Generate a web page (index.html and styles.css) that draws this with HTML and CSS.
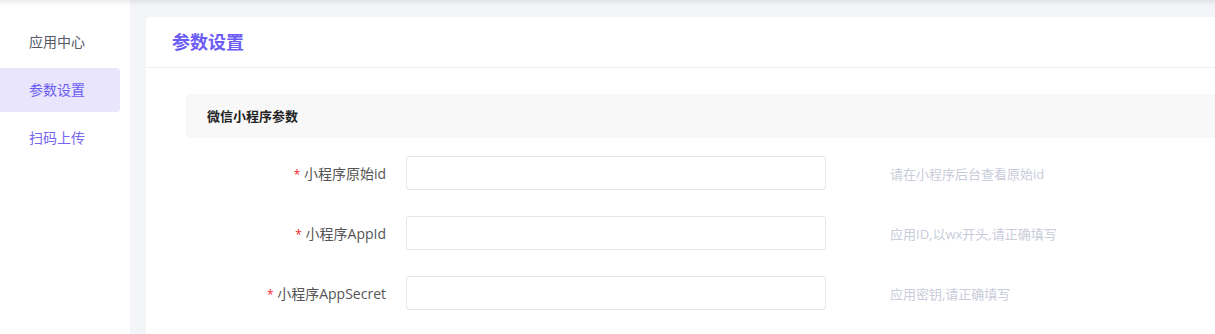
FILE: index.html
```html
<!DOCTYPE html>
<html lang="zh-CN">
<head>
    <meta charset="UTF-8">
    <meta name="viewport" content="width=device-width, initial-scale=1.0">
    <title>参数设置</title>
    <link rel="stylesheet" href="styles.css">
</head>
<body>
    <div class="layout">
        <aside class="sidebar">
            <a class="nav-item">应用中心</a>
            <a class="nav-item active">参数设置</a>
            <a class="nav-item link">扫码上传</a>
        </aside>

        <main class="main">
            <div class="card">
                <div class="card-header">参数设置</div>
                <div class="card-body">
                    <div class="section-title">微信小程序参数</div>

                    <div class="form-row">
                        <label class="form-label"><span class="req">*</span> 小程序原始id</label>
                        <input class="form-input" type="text">
                        <span class="form-hint">请在小程序后台查看原始id</span>
                    </div>
                    <div class="form-row">
                        <label class="form-label"><span class="req">*</span> 小程序AppId</label>
                        <input class="form-input" type="text">
                        <span class="form-hint">应用ID,以wx开头,请正确填写</span>
                    </div>
                    <div class="form-row">
                        <label class="form-label"><span class="req">*</span> 小程序AppSecret</label>
                        <input class="form-input" type="text">
                        <span class="form-hint">应用密钥,请正确填写</span>
                    </div>
                </div>
            </div>
        </main>
    </div>
</body>
</html>
```

FILE: styles.css
```css
body {
    margin: 0;
    font-family: "Open Sans", "Noto Sans CJK SC", sans-serif;
    background: #f4f5f9;
    color: #333;
    overflow: hidden;
}
.layout {
    display: flex;
    min-height: 334px;
    position: relative;
}
.layout::before {
    content: "";
    position: absolute;
    left: 0;
    right: 0;
    top: 0;
    height: 6px;
    background: linear-gradient(rgba(0,0,0,0.07), rgba(0,0,0,0));
    pointer-events: none;
}
.sidebar {
    width: 130px;
    flex-shrink: 0;
    background: white;
    padding-top: 20px;
    display: flex;
    flex-direction: column;
    gap: 4px;
}
.nav-item {
    display: flex;
    align-items: center;
    width: 120px;
    height: 44px;
    box-sizing: border-box;
    padding: 0 0 3px 29px;
    font-size: 14px;
    color: #555a66;
    border-radius: 0 4px 4px 0;
}
.nav-item.active {
    background: #e9e5fc;
    color: #6a5cf0;
}
.nav-item.link { color: #7766f0; }
.main {
    flex: 1;
    padding: 17px 0 0 16px;
}
.card {
    background: white;
    border-radius: 4px 0 0 0;
    height: 100%;
}
.card-header {
    height: 51px;
    box-sizing: border-box;
    display: flex;
    align-items: center;
    padding: 0 0 2px 26px;
    font-size: 18px;
    font-weight: bold;
    color: #6b5cf5;
    border-bottom: 1px solid #f0f0f3;
}
.card-body {
    padding: 26px 0 0 40px;
}
.section-title {
    height: 44px;
    box-sizing: border-box;
    display: flex;
    align-items: center;
    padding: 0 0 1px 21px;
    background: #f8f8f8;
    border-radius: 4px 0 0 4px;
    font-size: 13px;
    font-weight: bold;
    color: #222;
    margin-bottom: 18px;
}
.form-row {
    display: flex;
    align-items: center;
    margin-bottom: 26px;
}
.form-label {
    width: 200px;
    text-align: right;
    font-size: 14px;
    color: #555;
    margin-right: 20px;
}
.req {
    color: #f5222d;
    font-size: 12px;
}
.form-input {
    width: 420px;
    height: 34px;
    box-sizing: border-box;
    border: 1px solid #e4e6ea;
    border-radius: 3px;
    padding: 0 10px;
    font-size: 14px;
    outline: none;
}
.form-hint {
    margin-left: 64px;
    font-size: 13px;
    color: #c9ccda;
}
```
